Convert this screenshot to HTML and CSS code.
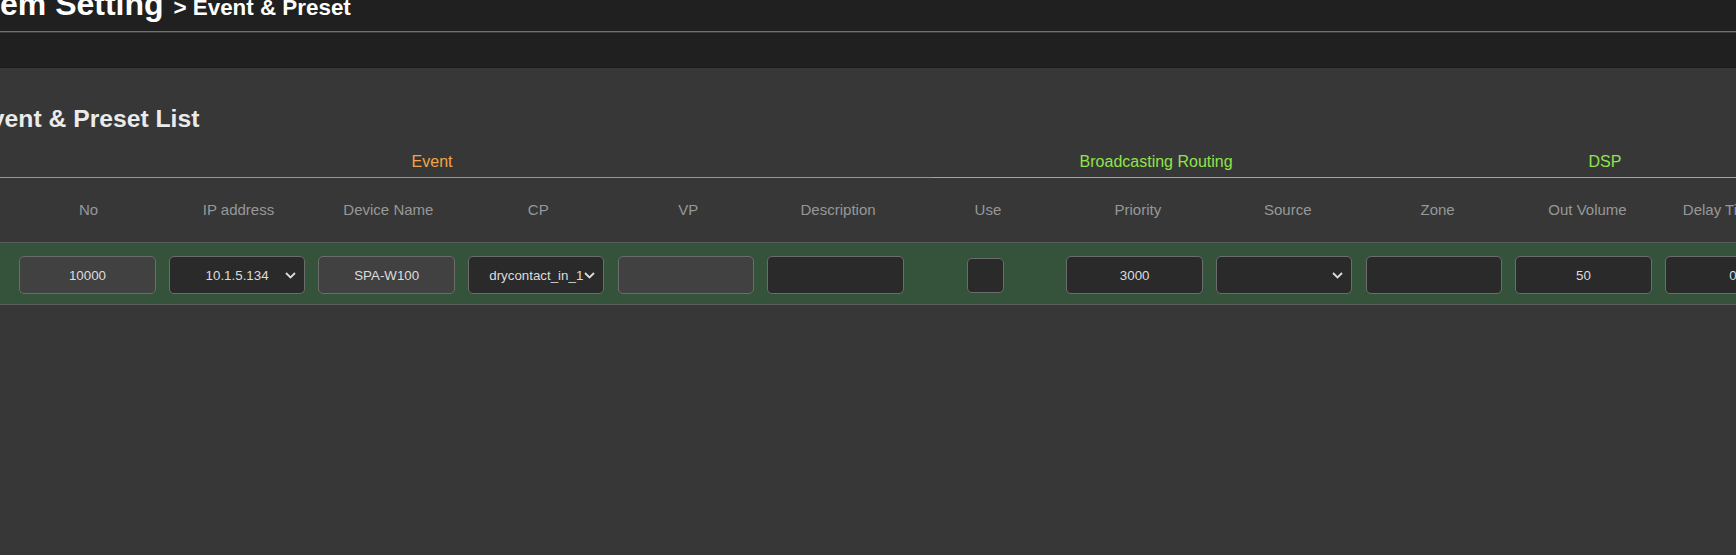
FILE: index.html
```html
<!DOCTYPE html>
<html lang="en">
<head>
    <meta charset="UTF-8">
    <meta name="viewport" content="width=device-width, initial-scale=1.0">
    <title>System Setting - Event &amp; Preset</title>
    <link rel="stylesheet" href="styles.css">
</head>
<body>
    <div class="page">
        <header class="top">
            <div class="title-bar">
                <h1>System Setting <span>&gt; Event &amp; Preset</span></h1>
            </div>
            <div class="sub-bar"></div>
        </header>

        <main class="content">
            <h2>Event &amp; Preset List</h2>

            <div class="list">
                <div class="groups">
                    <div class="group group-event">Event</div>
                    <div class="group group-routing">Broadcasting Routing</div>
                    <div class="group group-dsp">DSP</div>
                </div>

                <div class="cols">
                    <div></div>
                    <div>No</div>
                    <div>IP address</div>
                    <div>Device Name</div>
                    <div>CP</div>
                    <div>VP</div>
                    <div>Description</div>
                    <div>Use</div>
                    <div>Priority</div>
                    <div>Source</div>
                    <div>Zone</div>
                    <div>Out Volume</div>
                    <div>Delay Time (ms)</div>
                </div>

                <div class="row">
                    <div></div>
                    <div class="cell"><input class="field field-ro" type="text" value="10000" readonly></div>
                    <div class="cell">
                        <div class="select">
                            <select>
                                <option>10.1.5.134</option>
                            </select>
                            <svg class="chevron" width="11" height="7" viewBox="0 0 11 7"><path d="M1 1l4.5 4.5L10 1" fill="none" stroke="#dcdcdc" stroke-width="1.8"/></svg>
                        </div>
                    </div>
                    <div class="cell"><input class="field field-ro" type="text" value="SPA-W100" readonly></div>
                    <div class="cell">
                        <div class="select">
                            <select>
                                <option>drycontact_in_1</option>
                            </select>
                            <svg class="chevron" width="11" height="7" viewBox="0 0 11 7"><path d="M1 1l4.5 4.5L10 1" fill="none" stroke="#dcdcdc" stroke-width="1.8"/></svg>
                        </div>
                    </div>
                    <div class="cell"><input class="field field-ro" type="text" value="" readonly></div>
                    <div class="cell"><input class="field" type="text" value=""></div>
                    <div class="cell"><input class="check" type="checkbox"></div>
                    <div class="cell"><input class="field" type="text" value="3000"></div>
                    <div class="cell">
                        <div class="select">
                            <select>
                                <option></option>
                            </select>
                            <svg class="chevron" width="11" height="7" viewBox="0 0 11 7"><path d="M1 1l4.5 4.5L10 1" fill="none" stroke="#dcdcdc" stroke-width="1.8"/></svg>
                        </div>
                    </div>
                    <div class="cell"><input class="field" type="text" value=""></div>
                    <div class="cell"><input class="field" type="text" value="50"></div>
                    <div class="cell"><input class="field" type="text" value="0"></div>
                </div>
            </div>
        </main>
    </div>
</body>
</html>
```

FILE: styles.css
```css
html, body {
    margin: 0;
    padding: 0;
}

body {
    font-family: 'Liberation Sans', Arial, sans-serif;
    background-color: #373737;
    color: #eaeaea;
    min-height: 100vh;
    overflow: hidden;
}

/* page is shown scrolled a little to the right */
.page {
    margin-left: -67.6px;
}

.top {
    background-color: #202020;
}

.title-bar {
    height: 32px;
    box-sizing: border-box;
    padding-bottom: 7px;
    display: flex;
    align-items: flex-end;
    border-bottom: 1px solid #707070;
    box-shadow: 0 1px 0 #3c3c3c;
}

h1 {
    margin: 0;
    font-size: 32px;
    line-height: 32px;
    font-weight: bold;
    color: #ffffff;
    white-space: nowrap;
}

h1 span {
    font-size: 22.4px;
    margin-left: 1px;
}

.sub-bar {
    height: 35px;
    border-bottom: 1px solid #1b1b1b;
}

.content {
    padding-top: 37px;
}

h2 {
    margin: 0 0 0 42px;
    font-size: 24.7px;
    line-height: 28px;
    font-weight: bold;
    color: #ebebeb;
    white-space: nowrap;
}

.list {
    margin-top: 19px;
}

.groups {
    display: grid;
    grid-template-columns: 999.3px 448.8px 448.8px;
}

.group {
    font-size: 16px;
    line-height: 20px;
    text-align: center;
    padding-bottom: 5px;
    border-bottom: 1px solid;
    white-space: nowrap;
}

.group-event {
    color: #f2a447;
    border-color: #d38a3b;
}

.group-routing,
.group-dsp {
    color: #8fe34b;
    border-color: #78cf3c;
}

.cols {
    display: grid;
    grid-template-columns: 81.25px repeat(12, 149.9px);
    height: 64px;
    align-items: center;
    font-size: 15px;
    line-height: 18px;
    color: #979797;
    text-align: center;
    white-space: nowrap;
}

.row {
    display: grid;
    grid-template-columns: 80.3px repeat(12, 149.6px);
    align-items: center;
    background-color: #35523a;
    border-top: 1px solid #5c5c5c;
    border-bottom: 1px solid #5c5c5c;
    padding: 13px 0 10px;
}

.cell {
    display: flex;
    justify-content: center;
}

.field,
.select select {
    box-sizing: border-box;
    width: 136.4px;
    height: 38px;
    margin: 0;
    padding: 0 8px;
    border: 1px solid #6c6c6c;
    border-radius: 5px;
    background-color: #2a2a2a;
    color: #dcdcdc;
    font-family: 'Liberation Sans', Arial, sans-serif;
    font-size: 13.33px;
    text-align: center;
    outline: none;
}

.field-ro {
    background-color: #414141;
}

.select {
    position: relative;
}

.select select {
    appearance: none;
    -webkit-appearance: none;
    padding: 0 18px;
    text-align-last: center;
}

.chevron {
    position: absolute;
    right: 9px;
    top: 16px;
    pointer-events: none;
}

.check {
    appearance: none;
    -webkit-appearance: none;
    box-sizing: border-box;
    width: 37px;
    height: 35px;
    margin: 0;
    border: 1px solid #6c6c6c;
    border-radius: 5px;
    background-color: #2a2a2a;
}
```
